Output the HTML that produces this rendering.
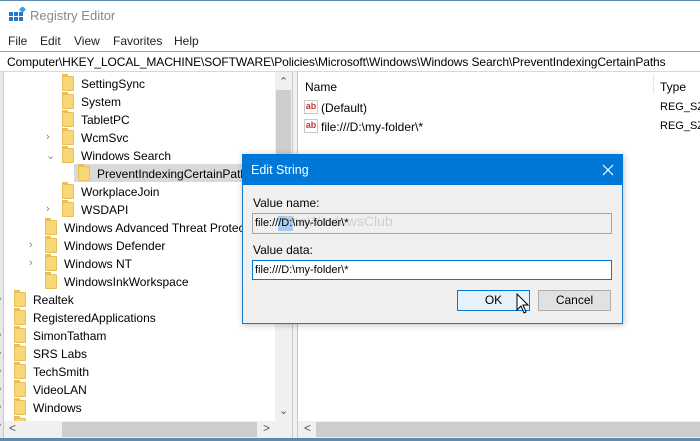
<!DOCTYPE html>
<html><head><meta charset="utf-8"><style>
*{margin:0;padding:0;box-sizing:border-box}
html,body{width:700px;height:441px;overflow:hidden}
body{background:#fff;font-family:"Liberation Sans",sans-serif;font-size:12px;color:#000;position:relative}
.a{position:absolute;white-space:nowrap}
.f{position:absolute;width:12px;height:15px;background:#f8d775;border:1px solid #e6be5a;border-radius:1px}
.f:before{content:"";position:absolute;left:-1px;top:-3px;width:6px;height:3px;background:#e6be5a}
.t{position:absolute;white-space:nowrap;font-size:12px}
.ch{position:absolute;color:#888;font-size:11px}
.ab{position:absolute;width:14px;height:14px;border:1px solid #c9c9c9;background:#fff;color:#c33;font-size:9px;font-weight:bold;line-height:11px;text-align:center}
</style></head><body>
<div class="a" style="left:0;top:0;width:700px;height:1px;background:#5b8bb0"></div>
<svg class="a" style="left:8px;top:7px" width="18" height="18"><g fill="#1e78d0"><rect x="1" y="5" width="4" height="4"/><rect x="6" y="5" width="4" height="4"/><rect x="1" y="10" width="4" height="4"/><rect x="6" y="10" width="4" height="4"/><rect x="11" y="10" width="4" height="4"/><rect x="11" y="5" width="4" height="4"/></g><rect x="12" y="0" width="5" height="5" fill="#3aa0e8" transform="rotate(45 14.5 2.5)"/></svg>
<div class="a" style="left:30px;top:8px;font-size:13px;color:#888">Registry Editor</div>
<div class="a" style="left:8px;top:34px;color:#222">File</div>
<div class="a" style="left:40px;top:34px;color:#222">Edit</div>
<div class="a" style="left:74px;top:34px;color:#222">View</div>
<div class="a" style="left:113px;top:34px;color:#222">Favorites</div>
<div class="a" style="left:174px;top:34px;color:#222">Help</div>
<div class="a" style="left:0;top:51px;width:700px;height:21px;border-top:1px solid #a0a0a0;border-bottom:1px solid #d8d8d8"></div>
<div class="a" style="left:7px;top:55px;letter-spacing:-0.1px">Computer\HKEY_LOCAL_MACHINE\SOFTWARE\Policies\Microsoft\Windows\Windows Search\PreventIndexingCertainPaths</div>
<div class="a" style="left:0;top:72px;width:4px;height:369px;background:#e8e8e8;border-right:1px solid #c8c8c8"></div>
<div class="a" style="left:275px;top:72px;width:17px;height:350px;background:#f0f0f0"></div>
<div class="a" style="left:276px;top:90px;width:15px;height:230px;background:#cdcdcd"></div>
<div class="a" style="left:279px;top:75px;color:#555;font-size:11px">&#8963;</div>
<div class="a" style="left:279px;top:404px;color:#555;font-size:11px">&#8964;</div>
<div class="a" style="left:292px;top:72px;width:6px;height:369px;background:#f0f0f0;border-left:1px solid #c8c8c8;border-right:1px solid #c8c8c8"></div>
<div class="a" style="left:74px;top:164px;width:170px;height:18px;background:#d9d9d9"></div>
<div id="tree"></div>
<div class="a" style="left:4px;top:421px;width:288px;height:17px;background:#f0f0f0"></div>
<div class="a" style="left:62px;top:422px;width:195px;height:15px;background:#cdcdcd"></div>
<div class="a" style="left:9px;top:421px;color:#555">&lt;</div>
<div class="a" style="left:263px;top:421px;color:#555">&gt;</div>
<div class="a" style="left:298px;top:421px;width:402px;height:17px;background:#f0f0f0"></div>
<div class="a" style="left:316px;top:422px;width:384px;height:15px;background:#cdcdcd"></div>
<div class="a" style="left:304px;top:421px;color:#555">&lt;</div>
<div class="a" style="left:0;top:438px;width:700px;height:3px;background:#5b8bb0"></div>
<div class="a" style="left:305px;top:80px">Name</div>
<div class="a" style="left:653px;top:74px;width:1px;height:20px;background:#e5e5e5"></div>
<div class="a" style="left:660px;top:80px">Type</div>
<div class="ab" style="left:304px;top:100px">ab</div>
<div class="a" style="left:321px;top:101px">(Default)</div>
<div class="a" style="left:660px;top:101px;font-size:11px">REG_SZ</div>
<div class="ab" style="left:304px;top:119px">ab</div>
<div class="a" style="left:321px;top:120px">file:///D:\my-folder\*</div>
<div class="a" style="left:660px;top:120px;font-size:11px">REG_SZ</div>
<div class="a" style="left:242px;top:154px;width:381px;height:170px;background:#f0f0f0;border:1px solid #1979ca;box-shadow:1px 1px 6px rgba(0,0,0,.25)"></div>
<div class="a" style="left:242px;top:154px;width:381px;height:31px;background:#0078d7"></div>
<div class="a" style="left:251px;top:163px;color:#fff;font-size:12.5px">Edit String</div>
<svg class="a" style="left:602px;top:164px" width="12" height="12"><path d="M1 1L11 11M11 1L1 11" stroke="#fff" stroke-width="1.2"/></svg>
<div class="a" style="left:253px;top:196px">Value name:</div>
<div class="a" style="left:252px;top:213px;width:360px;height:21px;background:#f0f0f0;border:1px solid #a5a5a5"></div>
<div class="a" style="left:278px;top:216px;width:15px;height:15px;background:#a9c9ee"></div>
<div class="a" style="left:283px;top:213px;font-size:14px;color:#d0d0d0">TheWindowsClub</div>
<div class="a" style="left:255px;top:217px;font-size:11px">file:///D:\my-folder\*</div>
<div class="a" style="left:253px;top:243px">Value data:</div>
<div class="a" style="left:252px;top:260px;width:360px;height:20px;background:#fff;border:1px solid #0078d7"></div>
<div class="a" style="left:255px;top:264px;font-size:11px">file:///D:\my-folder\*</div>
<div class="a" style="left:457px;top:290px;width:73px;height:21px;background:#e5f1fb;border:1px solid #0078d7;text-align:center;line-height:19px">OK</div>
<div class="a" style="left:538px;top:290px;width:73px;height:21px;background:#e1e1e1;border:1px solid #adadad;text-align:center;line-height:19px">Cancel</div>
<svg class="a" style="left:516px;top:293px" width="14" height="22"><path d="M1 1L1 17L5 13L8 20L10 19L7 12L12 12Z" fill="#fff" stroke="#000" stroke-width="1"/></svg>
<script>
var rows=[
["SettingSync",62,0],["System",62,0],["TabletPC",62,0],["WcmSvc",62,'>'],["Windows Search",62,'v'],
["PreventIndexingCertainPaths",78,0],["WorkplaceJoin",62,0],["WSDAPI",62,'>'],
["Windows Advanced Threat Protec",45,0],["Windows Defender",45,'>'],["Windows NT",45,'>'],["WindowsInkWorkspace",45,0],
["Realtek",14,'>'],["RegisteredApplications",14,0],["SimonTatham",14,'>'],["SRS Labs",14,'>'],["TechSmith",14,'>'],["VideoLAN",14,'>'],["Windows",14,'>'],["WOW6432Node",14,'>']];
var h='';rows.forEach(function(r,i){var y=75+i*18;var fx=r[1];
h+='<div class="f" style="left:'+fx+'px;top:'+(y+1)+'px"></div>';
var tx=fx+19;if(i==5)tx=97;
h+='<div class="t" style="left:'+tx+'px;top:'+(y+2)+'px;'+(i==8?'width:228px;overflow:hidden':'')+'">'+r[0]+'</div>';
if(r[2])h+='<div class="ch" style="left:'+(fx-16)+'px;top:'+(y+2)+'px">'+(r[2]=='v'?'&#8964;':'&#8250;')+'</div>';
});
document.getElementById('tree').innerHTML=h;
</script>
</body></html>
